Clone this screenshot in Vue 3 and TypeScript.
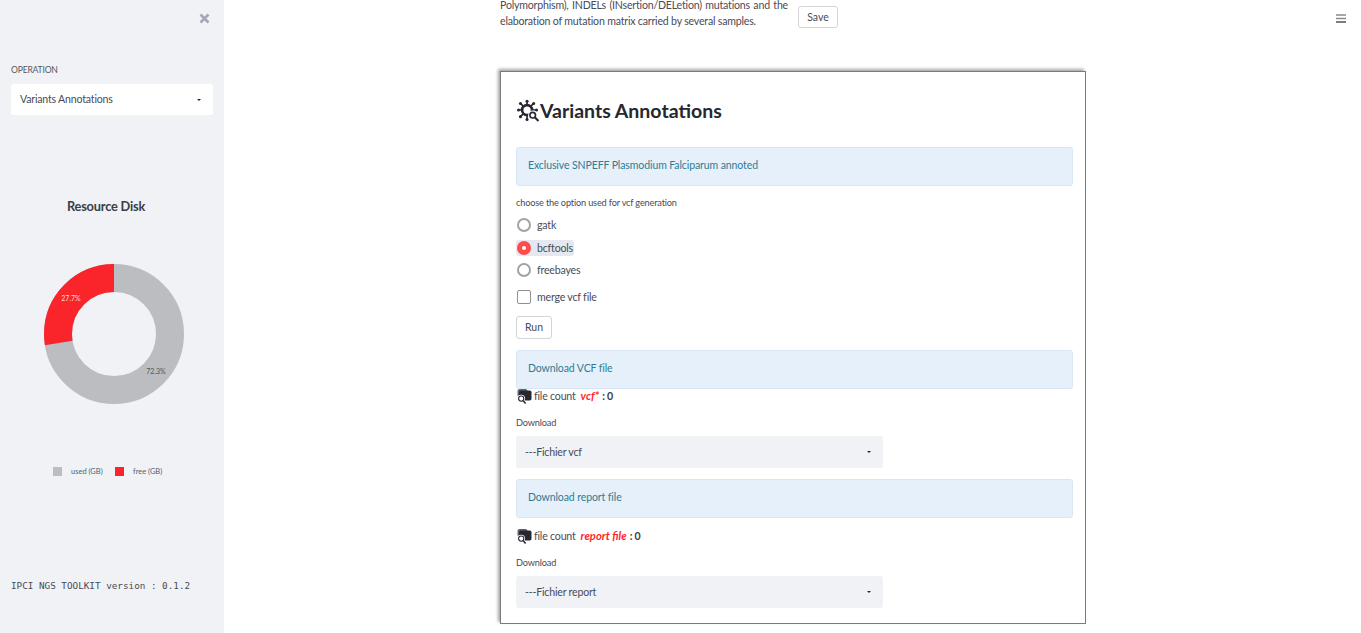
<script setup lang="ts">
import { ref } from 'vue'

const options = ['gatk', 'bcftools', 'freebayes']
const selected = ref('bcftools')
const merge = ref(false)

const radius = 56
const circumference = 2 * Math.PI * radius
const freeLength = circumference * 0.277
</script>

<template>
  <div class="page">
    <aside class="sidebar">
      <div class="close-row">
        <svg width="11" height="11" viewBox="0 0 11 11">
          <path d="M1.5 1.5l8 8M9.5 1.5l-8 8" stroke="#a3a8b4" stroke-width="2.6" />
        </svg>
      </div>
      <div class="side-label">OPERATION</div>
      <div class="select side-select">
        <span>Variants Annotations</span>
        <i class="caret"></i>
      </div>
      <h3 class="disk-title">Resource Disk</h3>
      <svg class="donut" width="140" height="140" viewBox="0 0 140 140">
        <g transform="rotate(-90 70 70)">
          <circle cx="70" cy="70" :r="radius" fill="none" stroke="#bcbdc1" stroke-width="28" />
          <circle
            cx="70"
            cy="70"
            :r="radius"
            fill="none"
            stroke="#f9252b"
            stroke-width="28"
            :stroke-dasharray="`${freeLength} ${circumference - freeLength}`"
            :stroke-dashoffset="freeLength"
          />
        </g>
        <text x="27" y="37" class="pct pct-free" text-anchor="middle">27.7%</text>
        <text x="112" y="110" class="pct pct-used" text-anchor="middle">72.3%</text>
      </svg>
      <div class="legend">
        <i class="swatch used"></i><span class="legend-text">used (GB)</span>
        <i class="swatch free"></i><span class="legend-text">free (GB)</span>
      </div>
      <div class="version">IPCI NGS TOOLKIT version : 0.1.2</div>
    </aside>

    <main class="main">
      <svg class="menu" width="10" height="9" viewBox="0 0 10 9">
        <path d="M0 1h10M0 4.5h10" stroke="#8b8b90" stroke-width="1.4" />
        <path d="M0 8h10" stroke="#262730" stroke-width="1.2" />
      </svg>
      <div class="column">
        <div class="intro">
          <p>
            Polymorphism), INDELs (INsertion/DELetion) mutations and the elaboration of mutation
            matrix carried by several samples.
          </p>
          <button class="btn save">Save</button>
        </div>

        <section class="card">
          <h2 class="title">
            <svg width="23" height="24" viewBox="0 0 24 24" fill="none" stroke="#262730">
              <circle cx="10.5" cy="11" r="5.2" stroke-width="2.8" />
              <path
                d="M10.5 5V2M10.5 17v3.5M4.5 11H1.5M16.5 11H20M6.2 6.7 3.6 4.1M14.8 6.7l2.6-2.6M6.2 15.3l-2.6 2.6"
                stroke-width="1.7"
              />
              <circle cx="10.5" cy="1.8" r="1.6" fill="#262730" stroke="none" />
              <circle cx="1.6" cy="11" r="1.6" fill="#262730" stroke="none" />
              <circle cx="3.6" cy="4.1" r="1.6" fill="#262730" stroke="none" />
              <circle cx="17.4" cy="4.1" r="1.6" fill="#262730" stroke="none" />
              <circle cx="20.4" cy="11" r="1.6" fill="#262730" stroke="none" />
              <circle cx="3.6" cy="17.9" r="1.6" fill="#262730" stroke="none" />
              <circle cx="10.5" cy="20.8" r="1.6" fill="#262730" stroke="none" />
              <circle cx="16.6" cy="16.6" r="5" fill="#fff" stroke="none" />
              <circle cx="16.4" cy="16.4" r="2.9" stroke-width="1.7" />
              <path d="M18.6 18.6 22.4 22.4" stroke-width="2.2" />
            </svg>
            <span>Variants Annotations</span>
          </h2>

          <div class="alert">Exclusive SNPEFF Plasmodium Falciparum annoted</div>

          <div class="small-label option-label">choose the option used for vcf generation</div>
          <div class="radios">
            <label v-for="option in options" :key="option" class="radio" :class="{ on: selected === option }">
              <span class="dot"></span>
              <span>{{ option }}</span>
            </label>
          </div>

          <label class="check">
            <span class="box" :class="{ on: merge }"></span>
            <span>merge vcf file</span>
          </label>

          <button class="btn run">Run</button>

          <div class="alert alert-vcf">Download VCF file</div>
          <div class="count count-vcf">
            <svg width="15" height="15" viewBox="0 0 15 15">
              <rect x="0.5" y="0" width="10" height="8" rx="2" fill="#62646e" />
              <rect x="2" y="1.5" width="12.5" height="10" rx="1.8" fill="#262730" />
              <circle cx="4.2" cy="9.6" r="3.9" fill="#fff" />
              <circle cx="4.2" cy="9.6" r="2.6" fill="#fff" stroke="#262730" stroke-width="1.1" />
              <path d="M6.2 11.7 8.6 14.4" stroke="#262730" stroke-width="1.5" />
            </svg>
            <span>file count</span>
            <em>vcf*</em>
            <strong>: 0</strong>
          </div>
          <div class="small-label dl-label">Download</div>
          <div class="select wide">
            <span>---Fichier vcf</span>
            <i class="caret"></i>
          </div>

          <div class="alert alert-report">Download report file</div>
          <div class="count count-report">
            <svg width="15" height="15" viewBox="0 0 15 15">
              <rect x="0.5" y="0" width="10" height="8" rx="2" fill="#62646e" />
              <rect x="2" y="1.5" width="12.5" height="10" rx="1.8" fill="#262730" />
              <circle cx="4.2" cy="9.6" r="3.9" fill="#fff" />
              <circle cx="4.2" cy="9.6" r="2.6" fill="#fff" stroke="#262730" stroke-width="1.1" />
              <path d="M6.2 11.7 8.6 14.4" stroke="#262730" stroke-width="1.5" />
            </svg>
            <span>file count</span>
            <em>report file</em>
            <strong>: 0</strong>
          </div>
          <div class="small-label dl-label">Download</div>
          <div class="select wide">
            <span>---Fichier report</span>
            <i class="caret"></i>
          </div>
        </section>
      </div>
    </main>
  </div>
</template>

<style>
html,
body {
  margin: 0;
  overflow: hidden;
  background: #fff;
}
</style>

<style scoped>
.page {
  display: flex;
  height: 633px;
  overflow: hidden;
  font-family: Lato, 'Noto Sans', sans-serif;
  font-size: 10.6px;
  letter-spacing: -0.2px;
  color: #4a4b55;
}

.sidebar {
  width: 224px;
  flex: none;
  box-sizing: border-box;
  height: 633px;
  padding: 13px 11px 0;
  background: #f0f2f6;
}

.close-row {
  display: flex;
  justify-content: flex-end;
  padding-right: 3px;
  height: 11px;
}

.side-label {
  margin-top: 40px;
  line-height: 12px;
  font-size: 8.6px;
  color: #555863;
}

.select {
  display: flex;
  align-items: center;
  justify-content: space-between;
  box-sizing: border-box;
  border-radius: 3px;
  padding: 0 12px 1px 9px;
  height: 32px;
  color: #4a4b55;
}

.side-select {
  margin-top: 8px;
  width: 202px;
  height: 31px;
  background: #fff;
}

.caret {
  width: 0;
  height: 0;
  margin-top: 1px;
  border-left: 2.5px solid transparent;
  border-right: 2.5px solid transparent;
  border-top: 2.5px solid #262730;
}

.disk-title {
  margin: 83px 0 0;
  width: 190px;
  text-align: center;
  font-size: 12.8px;
  line-height: 16px;
  font-weight: 700;
  color: #3b3d47;
}

.donut {
  display: block;
  margin: 50px 0 0 33px;
}

.pct {
  font-size: 7px;
  letter-spacing: 0;
  font-family: Lato, sans-serif;
}

.pct-free {
  fill: #fbdada;
}

.pct-used {
  fill: #55565c;
}

.legend {
  display: flex;
  align-items: center;
  margin: 63px 0 0 42px;
  height: 9px;
}

.swatch {
  width: 9px;
  height: 9px;
  flex: none;
}

.swatch.used {
  background: #bcbdc1;
}

.swatch.free {
  background: #f9252b;
}

.legend-text {
  margin-left: 9px;
  width: 44px;
  font-size: 7.5px;
  letter-spacing: 0;
  color: #4e5f78;
}

.version {
  margin-top: 104px;
  font-family: 'DejaVu Sans Mono', monospace;
  font-size: 9.3px;
  letter-spacing: 0;
  line-height: 12px;
  color: #4a4b55;
}

.main {
  position: relative;
  flex: 1;
  min-width: 0;
  padding-left: 276px;
}

.menu {
  position: absolute;
  top: 14px;
  right: 15px;
}

.column {
  width: 586px;
}

.intro {
  display: flex;
  align-items: flex-start;
  height: 71px;
  gap: 10px;
}

.intro p {
  margin: -3px 0 0;
  width: 288px;
  flex: none;
  line-height: 16px;
  text-align: justify;
  color: #4a4b55;
}

.btn {
  display: block;
  box-sizing: border-box;
  border: 1px solid #d4d5d9;
  border-radius: 3px;
  background: #fff;
  font: inherit;
  font-size: 10.5px;
  letter-spacing: 0;
  color: #4a4b55;
  padding: 0;
}

.save {
  margin-top: 6px;
  width: 40px;
  height: 22px;
}

.card {
  box-sizing: border-box;
  width: 586px;
  height: 553px;
  padding: 0 12px 0 15px;
  border: 1px solid #7a7a7a;
  box-shadow: -2px -2px 3px rgba(0, 0, 0, 0.35);
  background: #fff;
}

.title {
  display: flex;
  align-items: center;
  gap: 0;
  margin: 27px 0 0;
  height: 24px;
  font-size: 19.5px;
  letter-spacing: 0;
  line-height: 24px;
  font-weight: 700;
  color: #262730;
}

.title svg {
  margin-left: 1px;
  flex: none;
}

.alert {
  box-sizing: border-box;
  height: 39px;
  line-height: 35px;
  padding-left: 11px;
  border: 1px solid #d6e6f5;
  border-radius: 3px;
  background: #e6f0fa;
  font-size: 10.5px;
  letter-spacing: -0.1px;
  color: #2e7c94;
}

.card > .alert:first-of-type {
  margin-top: 24px;
}

.small-label {
  font-size: 9.2px;
  letter-spacing: -0.17px;
  line-height: 12px;
  color: #4a4b55;
}

.option-label {
  margin-top: 11px;
}

.radios {
  display: flex;
  flex-direction: column;
  align-items: flex-start;
  gap: 6px;
  margin-top: 8px;
}

.radio {
  display: flex;
  align-items: center;
  gap: 6px;
  height: 16.5px;
  padding-right: 1px;
  border-radius: 3px;
}

.radio.on {
  background: #e4e8ef;
}

.dot {
  box-sizing: border-box;
  width: 14px;
  height: 14px;
  margin-left: 1px;
  border: 2px solid #a3a3a3;
  border-radius: 50%;
  background: #fff;
}

.radio.on .dot {
  border: 5px solid #ff4b4b;
  background: #fff;
}

.check {
  display: flex;
  align-items: center;
  gap: 6px;
  margin-top: 11px;
  height: 14px;
}

.box {
  box-sizing: border-box;
  width: 14px;
  height: 14px;
  margin-left: 1px;
  border: 1px solid #8f8f8f;
  border-radius: 2px;
  background: #fff;
}

.run {
  margin-top: 12px;
  width: 36px;
  height: 23px;
}

.alert-vcf {
  margin-top: 11px;
}

.count {
  display: flex;
  align-items: center;
  gap: 3px;
  height: 15px;
}

.count svg {
  margin: 0 -1px 0 1px;
  flex: none;
}

.count em {
  margin: -2px 0 0 2px;
  font-size: 11.2px;
  letter-spacing: 0;
  font-weight: 700;
  color: #ff1f2a;
}

.count strong {
  font-weight: 700;
  color: #3b3d47;
}

.count-vcf {
  margin-top: 0;
}

.count-report {
  margin-top: 11px;
}

.dl-label {
  margin-top: 13px;
}

.wide {
  width: 367px;
  margin-top: 7px;
  padding-bottom: 0;
  background: #f0f2f6;
}

.alert-report {
  margin-top: 11px;
}
</style>
